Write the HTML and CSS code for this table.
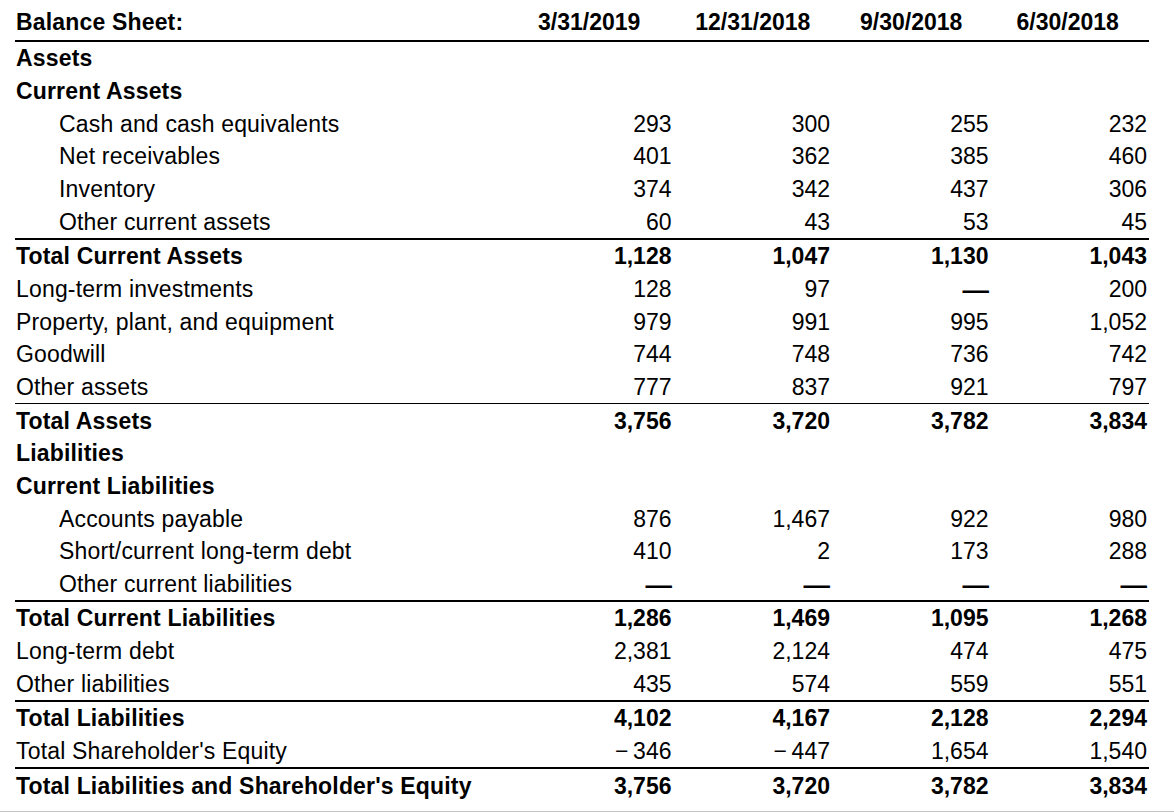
FILE: index.html
```html
<!DOCTYPE html>
<html lang="en">
<head>
<meta charset="utf-8">
<title>Balance Sheet</title>
<link rel="stylesheet" href="styles.css">
</head>
<body>
<div class="page">
  <div class="sheet">
    <div class="row head">
      <div class="lbl">Balance Sheet:</div>
      <div class="hd hd-first">3/31/2019</div>
      <div class="hd">12/31/2018</div>
      <div class="hd">9/30/2018</div>
      <div class="hd hd-last">6/30/2018</div>
    </div>

    <div class="row bold"><div class="lbl">Assets</div></div>
    <div class="row bold"><div class="lbl">Current Assets</div></div>
    <div class="row"><div class="lbl ind">Cash and cash equivalents</div><div class="n">293</div><div class="n">300</div><div class="n">255</div><div class="n">232</div></div>
    <div class="row"><div class="lbl ind">Net receivables</div><div class="n">401</div><div class="n">362</div><div class="n">385</div><div class="n">460</div></div>
    <div class="row"><div class="lbl ind">Inventory</div><div class="n">374</div><div class="n">342</div><div class="n">437</div><div class="n">306</div></div>
    <div class="row"><div class="lbl ind">Other current assets</div><div class="n">60</div><div class="n">43</div><div class="n">53</div><div class="n">45</div></div>

    <div class="row bold rule"><div class="lbl">Total Current Assets</div><div class="n">1,128</div><div class="n">1,047</div><div class="n">1,130</div><div class="n">1,043</div></div>
    <div class="row"><div class="lbl">Long-term investments</div><div class="n">128</div><div class="n">97</div><div class="n"><span class="dash">—</span></div><div class="n">200</div></div>
    <div class="row"><div class="lbl">Property, plant, and equipment</div><div class="n">979</div><div class="n">991</div><div class="n">995</div><div class="n">1,052</div></div>
    <div class="row"><div class="lbl">Goodwill</div><div class="n">744</div><div class="n">748</div><div class="n">736</div><div class="n">742</div></div>
    <div class="row"><div class="lbl">Other assets</div><div class="n">777</div><div class="n">837</div><div class="n">921</div><div class="n">797</div></div>

    <div class="row bold rule-thin"><div class="lbl">Total Assets</div><div class="n">3,756</div><div class="n">3,720</div><div class="n">3,782</div><div class="n">3,834</div></div>
    <div class="row bold"><div class="lbl">Liabilities</div></div>
    <div class="row bold"><div class="lbl">Current Liabilities</div></div>
    <div class="row"><div class="lbl ind">Accounts payable</div><div class="n">876</div><div class="n">1,467</div><div class="n">922</div><div class="n">980</div></div>
    <div class="row"><div class="lbl ind">Short/current long-term debt</div><div class="n">410</div><div class="n">2</div><div class="n">173</div><div class="n">288</div></div>
    <div class="row"><div class="lbl ind">Other current liabilities</div><div class="n"><span class="dash">—</span></div><div class="n"><span class="dash">—</span></div><div class="n"><span class="dash">—</span></div><div class="n"><span class="dash">—</span></div></div>

    <div class="row bold rule"><div class="lbl">Total Current Liabilities</div><div class="n">1,286</div><div class="n">1,469</div><div class="n">1,095</div><div class="n">1,268</div></div>
    <div class="row"><div class="lbl">Long-term debt</div><div class="n">2,381</div><div class="n">2,124</div><div class="n">474</div><div class="n">475</div></div>
    <div class="row"><div class="lbl">Other liabilities</div><div class="n">435</div><div class="n">574</div><div class="n">559</div><div class="n">551</div></div>

    <div class="row bold rule"><div class="lbl">Total Liabilities</div><div class="n">4,102</div><div class="n">4,167</div><div class="n">2,128</div><div class="n">2,294</div></div>
    <div class="row"><div class="lbl">Total Shareholder's Equity</div><div class="n">&minus;&thinsp;346</div><div class="n">&minus;&thinsp;447</div><div class="n">1,654</div><div class="n">1,540</div></div>

    <div class="row bold rule"><div class="lbl">Total Liabilities and Shareholder's Equity</div><div class="n">3,756</div><div class="n">3,720</div><div class="n">3,782</div><div class="n">3,834</div></div>
  </div>
</div>
</body>
</html>
```
FILE: styles.css
```css
html, body {
  margin: 0;
  padding: 0;
  background: #ffffff;
}

body {
  font-family: "Liberation Sans", Arial, Helvetica, sans-serif;
  font-size: 23px;
  color: #000000;
}

.page {
  box-sizing: border-box;
  height: 812px;
  padding: 0 25px 0 15px;
  border-bottom: 1px solid #c4c4c4;
}

.sheet {
  width: 1134px;
}

.row {
  display: grid;
  grid-template-columns: 500px repeat(4, 158.5px);
  align-items: center;
  height: 32.67px;
  line-height: 26px;
  white-space: nowrap;
}

.row.head {
  height: 40px;
  align-items: end;
  border-bottom: 2px solid #000;
  font-weight: bold;
}

.row.head > div {
  padding-bottom: 5px;
}

.bold {
  font-weight: bold;
}

.rule {
  border-top: 2px solid #000;
}

.rule-thin {
  border-top: 1px solid #000;
}

.lbl {
  padding-left: 1px;
  letter-spacing: 0.17px;
}

.lbl.ind {
  padding-left: 44px;
}

.hd {
  text-align: center;
}

.hd-first {
  padding-right: 10px;
}

.hd-last {
  padding-right: 4px;
}

.n {
  text-align: right;
  padding-right: 2px;
}

.dash {
  display: inline-block;
  transform: scaleX(1.15) translateY(1px);
  transform-origin: right center;
  font-weight: bold;
}
```
